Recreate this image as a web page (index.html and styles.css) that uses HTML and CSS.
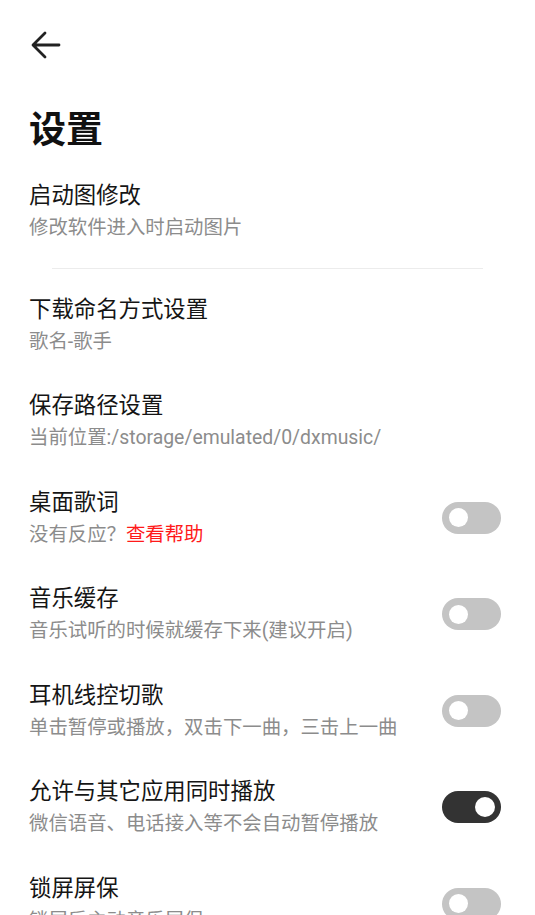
FILE: index.html
```html
<!DOCTYPE html>
<html lang="zh-CN">
<head>
<meta charset="utf-8">
<title>设置</title>
<link rel="stylesheet" href="styles.css">
</head>
<body>
<div class="app">
  <header class="topbar">
    <svg class="back" width="30" height="28" viewBox="0 0 30 28" aria-hidden="true">
      <path d="M28 14H3M14 2L2 14l12 12" fill="none" stroke="#222" stroke-width="2.8" stroke-linecap="round" stroke-linejoin="round"/>
    </svg>
  </header>
  <h1 class="page-title">设置</h1>

  <div class="row">
    <div class="text">
      <div class="title">启动图修改</div>
      <div class="sub">修改软件进入时启动图片</div>
    </div>
  </div>
  <div class="divider"></div>

  <div class="row">
    <div class="text">
      <div class="title">下载命名方式设置</div>
      <div class="sub">歌名-歌手</div>
    </div>
  </div>

  <div class="row">
    <div class="text">
      <div class="title">保存路径设置</div>
      <div class="sub">当前位置:/storage/emulated/0/dxmusic/</div>
    </div>
  </div>

  <div class="row">
    <div class="text">
      <div class="title">桌面歌词</div>
      <div class="sub">没有反应？<span class="link">查看帮助</span></div>
    </div>
    <div class="switch"><span class="knob"></span></div>
  </div>

  <div class="row">
    <div class="text">
      <div class="title">音乐缓存</div>
      <div class="sub">音乐试听的时候就缓存下来(建议开启)</div>
    </div>
    <div class="switch"><span class="knob"></span></div>
  </div>

  <div class="row">
    <div class="text">
      <div class="title">耳机线控切歌</div>
      <div class="sub">单击暂停或播放，双击下一曲，三击上一曲</div>
    </div>
    <div class="switch"><span class="knob"></span></div>
  </div>

  <div class="row">
    <div class="text">
      <div class="title">允许与其它应用同时播放</div>
      <div class="sub">微信语音、电话接入等不会自动暂停播放</div>
    </div>
    <div class="switch on"><span class="knob"></span></div>
  </div>

  <div class="row">
    <div class="text">
      <div class="title">锁屏屏保</div>
      <div class="sub">锁屏后主动音乐屏保</div>
    </div>
    <div class="switch"><span class="knob"></span></div>
  </div>
</div>
</body>
</html>
```

FILE: styles.css
```css
html, body {
  margin: 0;
  padding: 0;
  background: #ffffff;
}
body {
  font-family: Roboto, "Noto Sans CJK SC", "Noto Sans", sans-serif;
  color: #1a1a1a;
  overflow: hidden;
}
.app {
  width: 535px;
  height: 915px;
  overflow: hidden;
}
.topbar {
  height: 90px;
  display: flex;
  align-items: center;
  padding-left: 31px;
}
.back {
  display: block;
}
.page-title {
  margin: 19px 0 10px;
  padding-left: 29px;
  font-size: 37px;
  line-height: 44px;
  font-weight: 700;
  color: #111;
}
.row {
  display: flex;
  align-items: center;
  justify-content: space-between;
  padding: 16px 34px 16.5px 29px;
}
.text {
  display: flex;
  flex-direction: column;
  gap: 2px;
}
.title {
  font-size: 22.4px;
  line-height: 32px;
  color: #151515;
}
.sub {
  font-size: 19.4px;
  line-height: 30px;
  color: #8c8c8c;
  white-space: nowrap;
}
.link {
  color: #ff1a1a;
}
.divider {
  height: 1px;
  background: #ececec;
  margin: 8px 52px 8px;
}
.switch {
  width: 59px;
  height: 32px;
  border-radius: 16px;
  background: #c4c4c4;
  display: flex;
  align-items: center;
  padding: 0 6px 0 7px;
  box-sizing: border-box;
  flex-shrink: 0;
}
.switch .knob {
  width: 19px;
  height: 19px;
  border-radius: 50%;
  background: #ffffff;
}
.switch.on {
  background: #333333;
  justify-content: flex-end;
}
.switch.on .knob {
  width: 20px;
  height: 20px;
}
```
